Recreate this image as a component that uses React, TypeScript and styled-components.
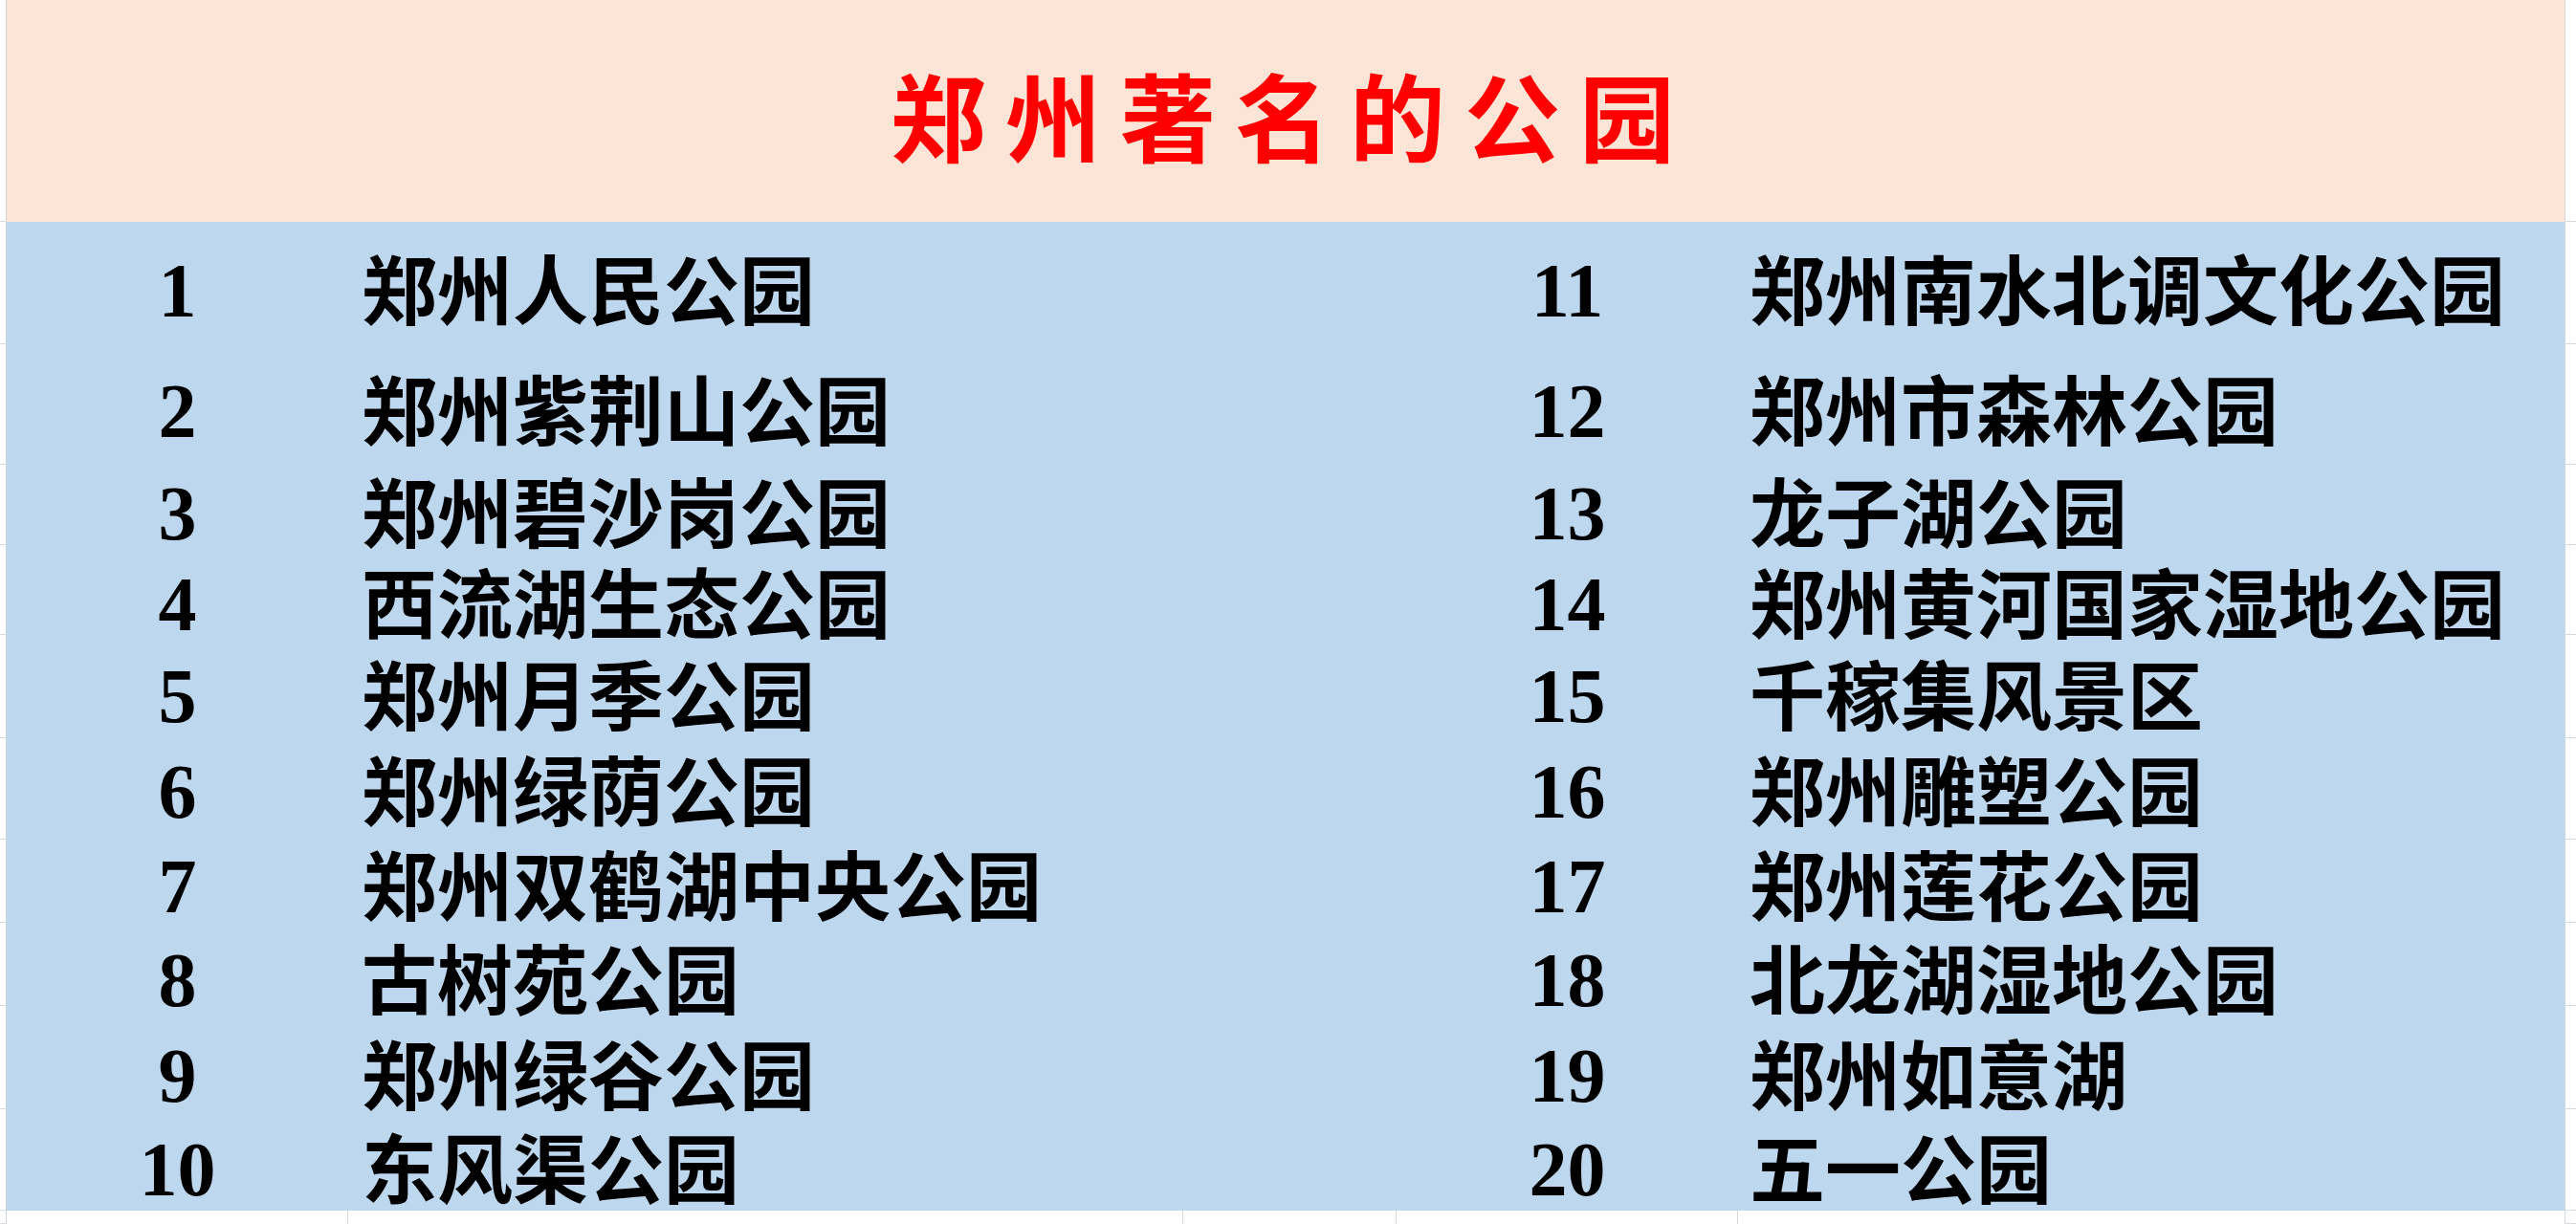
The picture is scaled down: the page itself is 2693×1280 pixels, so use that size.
import React from "react";
import styled, { createGlobalStyle } from "styled-components";

// spreadsheet-like list of parks, two blocks of ten rows
const GlobalStyle = createGlobalStyle`
  html, body {
    margin: 0;
    padding: 0;
    background: #ffffff;
  }
  #root {
    width: 2693px;
    height: 1280px;
    overflow: hidden;
  }
`;

const parks: string[] = [
  "郑州人民公园",
  "郑州紫荆山公园",
  "郑州碧沙岗公园",
  "西流湖生态公园",
  "郑州月季公园",
  "郑州绿荫公园",
  "郑州双鹤湖中央公园",
  "古树苑公园",
  "郑州绿谷公园",
  "东风渠公园",
  "郑州南水北调文化公园",
  "郑州市森林公园",
  "龙子湖公园",
  "郑州黄河国家湿地公园",
  "千稼集风景区",
  "郑州雕塑公园",
  "郑州莲花公园",
  "北龙湖湿地公园",
  "郑州如意湖",
  "五一公园",
];

// row heights picked so each text line sits where it does in the sheet
const rowHeights = [144, 108, 106, 84, 108, 92, 106, 90, 110, 86];

// gridline ticks visible in the narrow strips left and right of the table
const gutterHeights = [232, 128, 126, 84, 94, 108, 106, 87, 87, 108, 106, 14];

const COLUMNS = "357px 873px 223px 357px 864px";

const Sheet = styled.div`
  display: flex;
  width: 2693px;
  height: 1280px;
  background: #ffffff;
`;

const Gutter = styled.div<{ side: "left" | "right" }>`
  display: flex;
  flex-direction: column;
  width: ${(p) => (p.side === "left" ? "6px" : "11px")};
  ${(p) =>
    p.side === "left"
      ? "border-right: 1px solid #cfd5de;"
      : "border-left: 1px solid #d6dae1;"}
`;

const GutterCell = styled.div<{ h: number }>`
  height: ${(p) => p.h}px;
  box-sizing: border-box;
  border-bottom: 1px solid #d5d9e0;
  flex: none;
`;

const Table = styled.div`
  display: flex;
  flex-direction: column;
  width: 2674px;
`;

const TitleBar = styled.div`
  height: 232px;
  background: #fce4d6;
  display: flex;
  align-items: center;
  justify-content: center;
  padding: 6px 0 0 14px;
  box-sizing: border-box;
`;

const Title = styled.h1`
  margin: 0;
  font-family: "Noto Sans CJK SC", "Noto Sans CJK TC", sans-serif;
  font-size: 100px;
  font-weight: 700;
  line-height: 1;
  letter-spacing: 20px;
  color: #ff0000;
`;

const Body = styled.div`
  background: #bdd7ee;
  display: flex;
  flex-direction: column;
`;

const Row = styled.div<{ h: number }>`
  display: grid;
  grid-template-columns: ${COLUMNS};
  height: ${(p) => p.h}px;
  align-items: center;
`;

const NumCell = styled.div`
  text-align: center;
  font-family: "Liberation Serif", "Times New Roman", serif;
  font-weight: 700;
  font-size: 80px;
  line-height: 72px;
  color: #000000;
`;

const NameCell = styled.div<{ indent: number }>`
  padding-left: ${(p) => p.indent}px;
  padding-bottom: 8px;
  font-family: "Noto Sans CJK SC", "Noto Sans CJK TC", sans-serif;
  font-weight: 700;
  font-size: 79px;
  line-height: 70px;
  color: #000000;
  white-space: nowrap;
`;

const EmptyCell = styled.div``;

const FooterRow = styled.div`
  display: grid;
  grid-template-columns: ${COLUMNS};
  flex: 1;
`;

const FooterCell = styled.div<{ last?: boolean }>`
  box-sizing: border-box;
  border-right: ${(p) => (p.last ? "none" : "1px solid #d9d9d9")};
`;

const App: React.FC = () => {
  return (
    <>
      <GlobalStyle />
      <Sheet>
        <Gutter side="left">
          {gutterHeights.map((h, i) => (
            <GutterCell key={i} h={h} />
          ))}
        </Gutter>

        <Table>
          <TitleBar>
            <Title>郑州著名的公园</Title>
          </TitleBar>

          <Body>
            {rowHeights.map((h, i) => (
              <Row key={i} h={h}>
                <NumCell>{i + 1}</NumCell>
                <NameCell indent={14}>{parks[i]}</NameCell>
                <EmptyCell />
                <NumCell>{i + 11}</NumCell>
                <NameCell indent={12}>{parks[i + 10]}</NameCell>
              </Row>
            ))}
          </Body>

          <FooterRow>
            <FooterCell />
            <FooterCell />
            <FooterCell />
            <FooterCell />
            <FooterCell last />
          </FooterRow>
        </Table>

        <Gutter side="right">
          {gutterHeights.map((h, i) => (
            <GutterCell key={i} h={h} />
          ))}
        </Gutter>
      </Sheet>
    </>
  );
};

export default App;
